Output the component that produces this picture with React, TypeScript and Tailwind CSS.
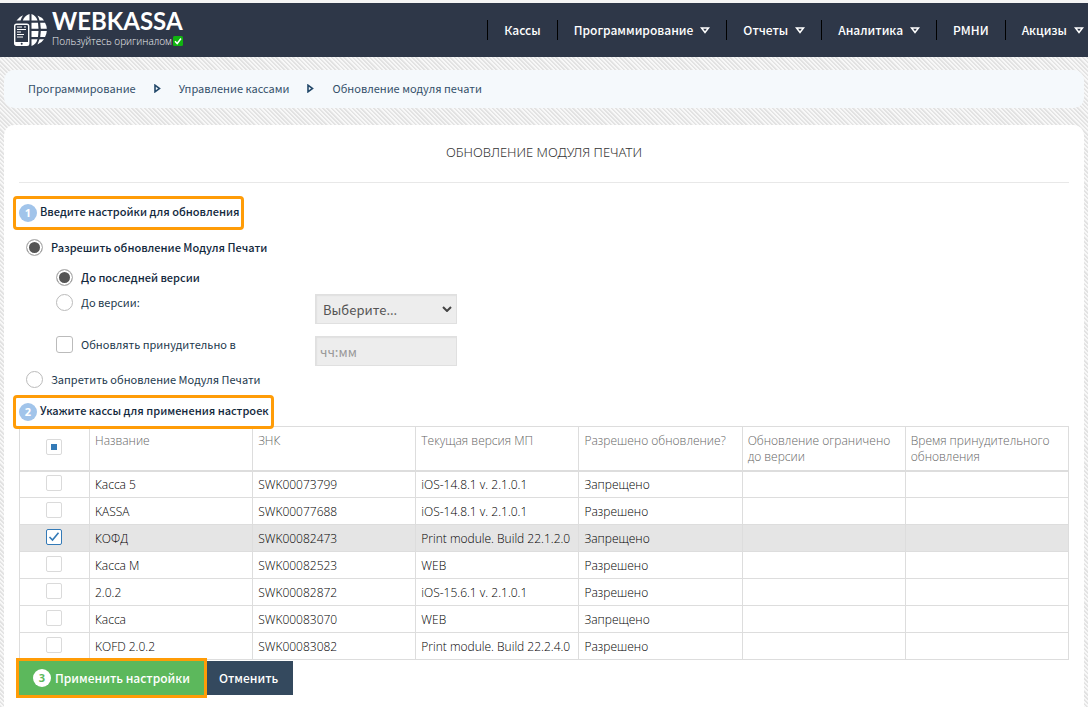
import React from "react";

type MenuItem = { label: string; sub?: boolean };
const menu: MenuItem[] = [
  { label: "Кассы" },
  { label: "Программирование", sub: true },
  { label: "Отчеты", sub: true },
  { label: "Аналитика", sub: true },
  { label: "РМНИ" },
  { label: "Акцизы", sub: true },
];

const columns = [
  "Название",
  "ЗНК",
  "Текущая версия МП",
  "Разрешено обновление?",
  "Обновление ограничено до версии",
  "Время принудительного обновления",
];

type Row = { name: string; znk: string; version: string; allowed: string; checked?: boolean };
const rows: Row[] = [
  { name: "Касса 5", znk: "SWK00073799", version: "iOS-14.8.1 v. 2.1.0.1", allowed: "Запрещено" },
  { name: "KASSA", znk: "SWK00077688", version: "iOS-14.8.1 v. 2.1.0.1", allowed: "Разрешено" },
  { name: "КОФД", znk: "SWK00082473", version: "Print module. Build 22.1.2.0", allowed: "Запрещено", checked: true },
  { name: "Касса М", znk: "SWK00082523", version: "WEB", allowed: "Разрешено" },
  { name: "2.0.2", znk: "SWK00082872", version: "iOS-15.6.1 v. 2.1.0.1", allowed: "Разрешено" },
  { name: "Касса", znk: "SWK00083070", version: "WEB", allowed: "Запрещено" },
  { name: "KOFD 2.0.2", znk: "SWK00083082", version: "Print module. Build 22.2.4.0", allowed: "Разрешено" },
];

function Logo() {
  return (
    <svg className="h-8 w-[33px] shrink-0" viewBox="0 0 33 32" aria-hidden="true">
      <g fill="#fff">
        <path d="M2.500 6.500 Q4.500 3 9 1.200 Q7.300 4 6.500 6.500Z" />
        <path d="M8.800 6.500 Q10.500 1.500 15.500 0 V6.500Z" />
        <path d="M17.500 0 Q22 1.500 23.500 6.500 H17.500Z" />
        <path d="M23.500 1.500 Q28 3.200 30 6.500 H25.500 Q24.800 3.700 23.500 1.500Z" />
        <path d="M17.500 8.800 H24 L24.500 14.800 H17.500Z" />
        <path d="M26.200 8.800 H31 Q32.600 11.500 32.800 14.800 H26.800Z" />
        <path d="M17.500 17 H24.500 L24 23 H17.500Z" />
        <path d="M26.800 17 H32.800 Q32.500 20.500 31 23 H26.200Z" />
        <path d="M17.500 25.200 H23.500 Q22 30.500 17.500 32Z" />
        <path d="M25.500 25.200 H30 Q27.500 29 23.500 30.500Z" />
      </g>
      <rect x="0.700" y="10.200" width="14" height="21" rx="1.800" fill="#2e3748" stroke="#fff" strokeWidth="1.400" />
      <path d="M0.700 28 H14.700 V29.500 Q14.700 31.500 12.700 31.500 H2.700 Q0.700 31.500 0.700 29.500Z" fill="#fff" />
      <circle cx="7.700" cy="29.800" r="1" fill="#2e3748" />
      <path d="M3 13 H8 M10 13 H12 M3 15.500 H12 M3 18 H7 M3 20.500 H10 M3 23 H9" stroke="#fff" strokeWidth="1.100" />
    </svg>
  );
}

function Step({ n, dark = true }: { n: number; dark?: boolean }) {
  return (
    <span
      className={
        dark
          ? "flex size-[18px] shrink-0 items-center justify-center rounded-full bg-[#a1c4ea] font-['Noto_Sans'] text-[11px] font-bold text-white"
          : "flex size-[18px] shrink-0 items-center justify-center rounded-full bg-white font-['Noto_Sans'] text-[11px] font-bold text-[#5cb85c]"
      }
    >
      {n}
    </span>
  );
}

function StepHeading({ n, children }: { n: number; children: React.ReactNode }) {
  return (
    <h2 className="flex h-7 w-fit items-center gap-[3px] rounded-[1px] bg-white pr-0.5 pl-[3px] text-[11px] font-medium text-[#12283c] outline-3 outline-[#ff9c07]">
      <Step n={n} />
      <span className="pb-1">{children}</span>
    </h2>
  );
}

const radio =
  "size-[17px] shrink-0 appearance-none rounded-full border border-[#bbb] bg-white checked:bg-[#555] checked:shadow-[inset_0_0_0_2px_#fff]";
const tick =
  "block size-4 appearance-none rounded-[2px] border border-[#dadada] bg-white checked:border-[#337ab7]";

export default function App() {
  return (
    <div className="min-h-screen bg-[#f8f8f8] bg-[repeating-linear-gradient(45deg,#e2e2e2_0px,#e2e2e2_1px,#f8f8f8_2px,#f8f8f8_3px)] font-['Noto_Sans_CJK_JP','Noto_Sans',sans-serif] text-[#23394d]">
      <header className="flex h-[57px] items-center justify-between overflow-hidden border-t-3 border-[#f4f4f4] bg-[#2e3748] pl-3.5 text-white">
        <a href="#" className="flex shrink-0 items-center gap-[5px]">
          <Logo />
          <span className="flex flex-col gap-0.5 pb-1">
            <span className="font-[Lato] text-2xl leading-6 font-bold">WEBKASSA</span>
            <span className="flex items-center gap-px font-['Open_Sans'] text-[10px] leading-3 font-light text-[#f0f2f5]">
              Пользуйтесь оригиналом
              <svg className="size-2.5" viewBox="0 0 10 10" aria-hidden="true">
                <rect width="10" height="10" rx="1.500" fill="#10b410" />
                <path d="M2 5.200 L4.200 7.500 L8 2.500" fill="none" stroke="#fff" strokeWidth="1.500" />
              </svg>
            </span>
          </span>
        </a>
        <nav className="flex shrink-0">
          {menu.map((m) => (
            <a
              key={m.label}
              href="#"
              className="flex h-5 items-center gap-[7px] border-l border-black px-4 text-xs font-medium last:pr-1"
            >
              {m.label}
              {m.sub && (
                <svg className="h-[7px] w-[10px]" viewBox="0 0 10 7" aria-hidden="true">
                  <path d="M1.500 1 H8.500 L5 5.500Z" fill="none" stroke="#fff" strokeWidth="1.600" />
                </svg>
              )}
            </a>
          ))}
        </nav>
      </header>

      <nav
        aria-label="Навигация"
        className="mx-1 mt-[13px] flex h-[38px] items-center gap-[18px] rounded-[10px] bg-[#f5f9fc] px-6 pb-0.5 text-[11px] text-[#34506a]"
      >
        {["Программирование", "Управление кассами", "Обновление модуля печати"].map((t, i) => (
          <React.Fragment key={t}>
            {i > 0 && (
              <svg className="h-[9px] w-[7px]" viewBox="0 0 7 9" aria-hidden="true">
                <path d="M1 1.200 V7.800 L5.500 4.500Z" fill="none" stroke="#23496a" strokeWidth="1.600" />
              </svg>
            )}
            <a href="#">{t}</a>
          </React.Fragment>
        ))}
      </nav>

      <main className="mx-1 mt-[17px] min-h-[582px] rounded-t-[10px] bg-white px-[15px]">
        <h1 className="flex h-[58px] items-center justify-center border-b border-[#e8e8e8] pb-0.5 font-['Noto_Sans'] text-[13px] font-light text-[#333]">
          ОБНОВЛЕНИЕ МОДУЛЯ ПЕЧАТИ
        </h1>

        <form>
          <div className="-ml-[3px] pt-4">
            <StepHeading n={1}>Введите настройки для обновления</StepHeading>
          </div>

          <div className="mt-3 flex flex-col pl-[7px] text-[11px]">
            <label className="flex h-[17px] items-center gap-2 font-medium text-[#12283c]">
              <input type="radio" name="mode" defaultChecked className={radio} />
              Разрешить обновление Модуля Печати
            </label>
            <div className="pl-[30px]">
              <label className="mt-[13px] flex h-[17px] items-center gap-2 font-medium text-[#12283c]">
                <input type="radio" name="target" defaultChecked className={radio} />
                До последней версии
              </label>
              <div className="mt-2 flex items-start">
                <label className="flex h-[17px] w-[259px] items-center gap-2">
                  <input type="radio" name="target" className={radio} />
                  До версии:
                </label>
                <div className="relative">
                  <select
                    aria-label="Версия"
                    className="block h-[30px] w-[142px] appearance-none border border-[#e0e0e0] bg-[#ededed] px-[7px] pt-0.5 text-[13px] text-[#555] shadow-[inset_1px_1px_1px_#e0e0e0]"
                  >
                    <option>Выберите...</option>
                  </select>
                  <svg className="pointer-events-none absolute top-3 right-[5px] h-1.5 w-2.5" viewBox="0 0 10 6" aria-hidden="true">
                    <path d="M1 1 L5 5 L9 1" fill="none" stroke="#444" strokeWidth="2" />
                  </svg>
                </div>
              </div>
              <div className="mt-3 flex items-start">
                <label className="flex h-[17px] w-[259px] items-center gap-2">
                  <input type="checkbox" className="size-[17px] appearance-none rounded-[3px] border border-[#bbb] bg-white" />
                  Обновлять принудительно в
                </label>
                <input
                  type="text"
                  aria-label="Время обновления"
                  placeholder="чч:мм"
                  className="h-[30px] w-[142px] border border-[#e0e0e0] bg-[#ededed] px-1 text-[13px] shadow-[inset_1px_1px_1px_#e0e0e0] placeholder:text-[#999]"
                />
              </div>
            </div>
            <label className="mt-[5px] flex h-[17px] items-center gap-2">
              <input type="radio" name="mode" className={radio} />
              Запретить обновление Модуля Печати
            </label>
          </div>

          <div className="relative z-10 mt-2.5 -ml-[3px]">
            <StepHeading n={2}>Укажите кассы для применения настроек</StepHeading>
          </div>

          <table className="w-full table-fixed border-collapse font-['Open_Sans'] text-xs font-light text-black">
            <thead>
              <tr className="h-11 text-left align-top leading-4 text-[#666]">
                <th className="w-[70px] border border-b-2 border-[#ddd] pt-3 pr-0.5">
                  <span className="relative mx-auto block size-4">
                    <input type="checkbox" aria-label="Выбрать все" className={tick} />
                    <span className="pointer-events-none absolute inset-[5px] bg-[#337ab7]" />
                  </span>
                </th>
                {columns.map((c) => (
                  <th key={c} className="border border-b-2 border-[#ddd] px-[5px] pt-1.5 pb-1 font-light">
                    {c}
                  </th>
                ))}
              </tr>
            </thead>
            <tbody>
              {rows.map((r) => (
                <tr key={r.znk} className={r.checked ? "h-[27px] bg-[#e5e5e5]" : "h-[27px]"}>
                  <td className="border border-[#ddd] pr-0.5 pb-0.5">
                    <span className="relative mx-auto block size-4">
                      <input type="checkbox" aria-label={r.name} defaultChecked={r.checked} className={tick} />
                      {r.checked && (
                        <svg className="pointer-events-none absolute inset-0 size-4" viewBox="0 0 16 16" aria-hidden="true">
                          <path d="M3.500 8 L6.500 11 L12.500 3.800" fill="none" stroke="#337ab7" strokeWidth="1.600" />
                        </svg>
                      )}
                    </span>
                  </td>
                  <td className="border border-[#ddd] px-[5px] pt-0.5">{r.name}</td>
                  <td className="border border-[#ddd] px-[5px] pt-0.5">{r.znk}</td>
                  <td className="border border-[#ddd] px-[5px] pt-0.5 whitespace-nowrap">{r.version}</td>
                  <td className="border border-[#ddd] px-[5px] pt-0.5">{r.allowed}</td>
                  <td className="border border-[#ddd]" />
                  <td className="border border-[#ddd]" />
                </tr>
              ))}
            </tbody>
          </table>

          <div className="mt-px flex text-xs font-medium text-white">
            <button
              type="submit"
              className="relative flex h-[34px] items-center gap-1 bg-[#5cb85c] px-3.5 outline-3 outline-[#ff9c07]"
            >
              <Step n={3} dark={false} />
              Применить настройки
            </button>
            <button type="button" className="h-[34px] bg-[#34495e] px-[15px]">
              Отменить
            </button>
          </div>
        </form>
      </main>
    </div>
  );
}
